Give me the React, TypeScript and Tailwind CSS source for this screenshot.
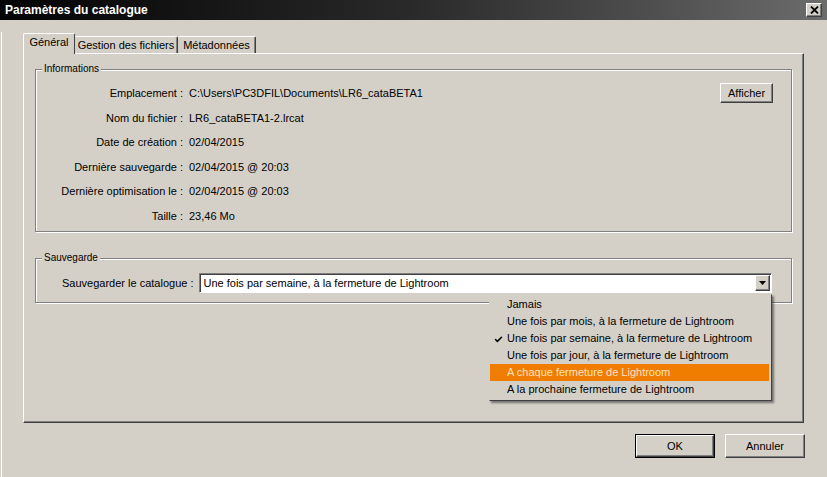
import { Check } from 'lucide-react'

const font = { fontFamily: '"Liberation Sans", Arial, sans-serif' }

const infoRows = [
  { label: 'Nom du fichier :', value: 'LR6_cataBETA1-2.lrcat' },
  { label: 'Date de création :', value: '02/04/2015' },
  { label: 'Dernière sauvegarde :', value: '02/04/2015 @ 20:03' },
  { label: 'Dernière optimisation le :', value: '02/04/2015 @ 20:03' },
  { label: 'Taille :', value: '23,46 Mo' },
]

const options = [
  { text: 'Jamais' },
  { text: 'Une fois par mois, à la fermeture de Lightroom' },
  { text: 'Une fois par semaine, à la fermeture de Lightroom', checked: true },
  { text: 'Une fois par jour, à la fermeture de Lightroom' },
  { text: 'A chaque fermeture de Lightroom', active: true },
  { text: 'A la prochaine fermeture de Lightroom' },
]

function GroupBox({ title, className, children }: { title: string; className?: string; children: React.ReactNode }) {
  return (
    <div
      className={`relative border border-[#808080] shadow-[inset_1px_1px_0_#fff,1px_1px_0_#fff] ${className ?? ''}`}
    >
      <span className="absolute -top-[7px] left-[6px] bg-[#d4d0c8] px-[2px] text-[10px] leading-[12px] text-black">
        {title}
      </span>
      {children}
    </div>
  )
}

function Button({ label, isDefault, className }: { label: string; isDefault?: boolean; className?: string }) {
  return (
    <div className={`${isDefault ? 'border border-black' : ''} ${className ?? ''}`}>
      <div className="flex h-full w-full items-center justify-center border-l border-t border-white border-r border-b border-r-[#404040] border-b-[#404040] bg-[#d4d0c8] shadow-[inset_-1px_-1px_0_#808080] text-black">
        {label}
      </div>
    </div>
  )
}

export default function App() {
  return (
    <div className="w-[827px] h-[477px] bg-[#d4d0c8] text-[11px] leading-none overflow-hidden" style={font}>
      {/* title bar */}
      <div className="flex h-[20px] items-center justify-between bg-gradient-to-r from-[#050505] via-[#2a2a2a] to-[#6c6c6c] pl-[5px] pr-[5px]">
        <span className="text-[12px] font-bold text-white">Paramètres du catalogue</span>
        <div className="flex h-[14px] w-[16px] items-center justify-center border-l border-t border-white border-r border-b border-r-[#404040] border-b-[#404040] bg-[#d4d0c8] shadow-[inset_-1px_-1px_0_#808080]">
          <svg width="9" height="8" viewBox="0 0 9 8">
            <path d="M1 0.5 L8 7.5 M8 0.5 L1 7.5" stroke="#000" strokeWidth="1.8" />
          </svg>
        </div>
      </div>

      <div className="ml-px h-[457px] border-l border-white border-b-2 border-b-[#404040] pl-[21px]">
        {/* tabs */}
        <div className="relative z-10 mt-[12px] flex h-[21px] items-end">
          <div className="-mb-px flex h-[21px] w-[52px] items-center justify-center rounded-t-[2px] border-l border-t border-white border-r border-r-[#404040] bg-[#d4d0c8] pb-[3px] text-black">
            Général
          </div>
          <div className="flex h-[17px] w-[103px] items-center justify-center rounded-t-[2px] border-t border-white border-r border-r-[#404040] shadow-[inset_-1px_0_0_#808080] text-black">
            Gestion des fichiers
          </div>
          <div className="flex h-[17px] w-[78px] items-center justify-center rounded-t-[2px] border-t border-white border-r border-r-[#404040] shadow-[inset_-1px_0_0_#808080] text-black">
            Métadonnées
          </div>
        </div>

        {/* tab page */}
        <div className="h-[370px] w-[781px] border-l border-t border-white border-r border-b border-r-[#404040] border-b-[#404040] shadow-[inset_-1px_-1px_0_#808080] pl-[11px]">
          <GroupBox title="Informations" className="mt-[15px] h-[163px] w-[757px] pt-[13px]">
            <div className="flex h-[20px] items-center">
              <span className="w-[147px] text-right text-black">Emplacement :</span>
              <span className="ml-[6px] flex-1 text-black">{'C:\\Users\\PC3DFIL\\Documents\\LR6_cataBETA1'}</span>
              <Button label="Afficher" className="mr-[18px] h-[20px] w-[53px]" />
            </div>
            <div className="mt-[3px]">
              {infoRows.map((row) => (
                <div key={row.label} className="flex h-[24.5px] items-center">
                  <span className="w-[147px] text-right text-black">{row.label}</span>
                  <span className="ml-[6px] text-black">{row.value}</span>
                </div>
              ))}
            </div>
          </GroupBox>

          <GroupBox title="Sauvegarde" className="mt-[26px] h-[45px] w-[757px] pt-[14px] pl-[26px] pr-[19px]">
            <div className="flex h-[20px] items-center">
              <span className="text-black">Sauvegarder le catalogue :</span>
              <div className="relative ml-[6px] flex h-[20px] flex-1 items-center border-l border-t border-[#808080] border-r border-b border-r-white border-b-white bg-white shadow-[inset_1px_1px_0_#404040]">
                <span className="pl-[3px] pt-px text-black flex-1">Une fois par semaine, à la fermeture de Lightroom</span>
                <div className="mr-px flex h-[16px] w-[15px] items-center justify-center border-l border-t border-white border-r border-b border-r-[#404040] border-b-[#404040] bg-[#d4d0c8] shadow-[inset_-1px_-1px_0_#808080]">
                  <svg width="7" height="4" viewBox="0 0 7 4">
                    <path d="M0 0 H7 L3.5 4 Z" fill="#000" />
                  </svg>
                </div>

                {/* open list */}
                <div className="absolute right-[-1px] top-[20px] z-20 w-[283px] border-l border-t border-[#d4d0c8] border-r border-b border-r-[#404040] border-b-[#404040] bg-[#d4d0c8] pt-px pb-[2px] shadow-[2px_2px_2px_rgba(0,0,0,0.45)]">
                  {options.map((o) => (
                    <div
                      key={o.text}
                      className={`relative mr-[2px] flex h-[17px] items-center pl-[17px] ${o.active ? 'bg-[#f07c00] text-[#fde3c0]' : 'text-black'}`}
                    >
                      {o.checked && (
                        <Check className="absolute left-[4px] top-[5px] h-[9px] w-[9px]" strokeWidth={4} color="#000" />
                      )}
                      {o.text}
                    </div>
                  ))}
                </div>
              </div>
            </div>
          </GroupBox>
        </div>

        {/* dialog buttons */}
        <div className="mt-[11px] flex justify-end gap-[10px] pr-[22px]">
          <Button label="OK" isDefault className="h-[24px] w-[80px]" />
          <Button label="Annuler" className="h-[24px] w-[80px]" />
        </div>
      </div>
    </div>
  )
}
